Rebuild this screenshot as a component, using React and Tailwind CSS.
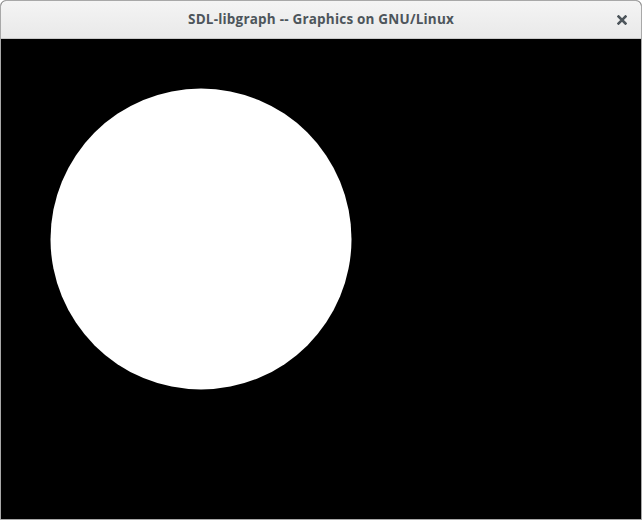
import React from 'react'

function App() {
    return (
        <div className="w-[642px] h-[520px] flex flex-col bg-black border border-[#a8a8a8] rounded-t-[6px] overflow-hidden" style={{ fontFamily: '"Open Sans", "DejaVu Sans", sans-serif' }}>
            <div className="h-[38px] shrink-0 flex items-center justify-center relative bg-gradient-to-b from-[#f4f4f4] to-[#e9e9e9] border-b border-[#c8c8c8]">
                <span className="text-[13.5px] font-bold text-[#4d555b] tracking-[0.2px]">SDL-libgraph -- Graphics on GNU/Linux</span>
                <button className="absolute right-[13px] top-[13px] w-[12px] h-[12px] flex items-center justify-center">
                    <svg width="10" height="10" viewBox="0 0 10 10">
                        <path d="M1.5 1.5 L8.5 8.5 M8.5 1.5 L1.5 8.5" stroke="#4d555b" strokeWidth="2.5" strokeLinecap="square" />
                    </svg>
                </button>
            </div>
            <div className="flex-1 bg-black">
                <svg width="640" height="480" viewBox="0 0 640 480">
                    <circle cx="200" cy="200" r="150.5" fill="#fff" />
                </svg>
            </div>
        </div>
    )
}

export default App
